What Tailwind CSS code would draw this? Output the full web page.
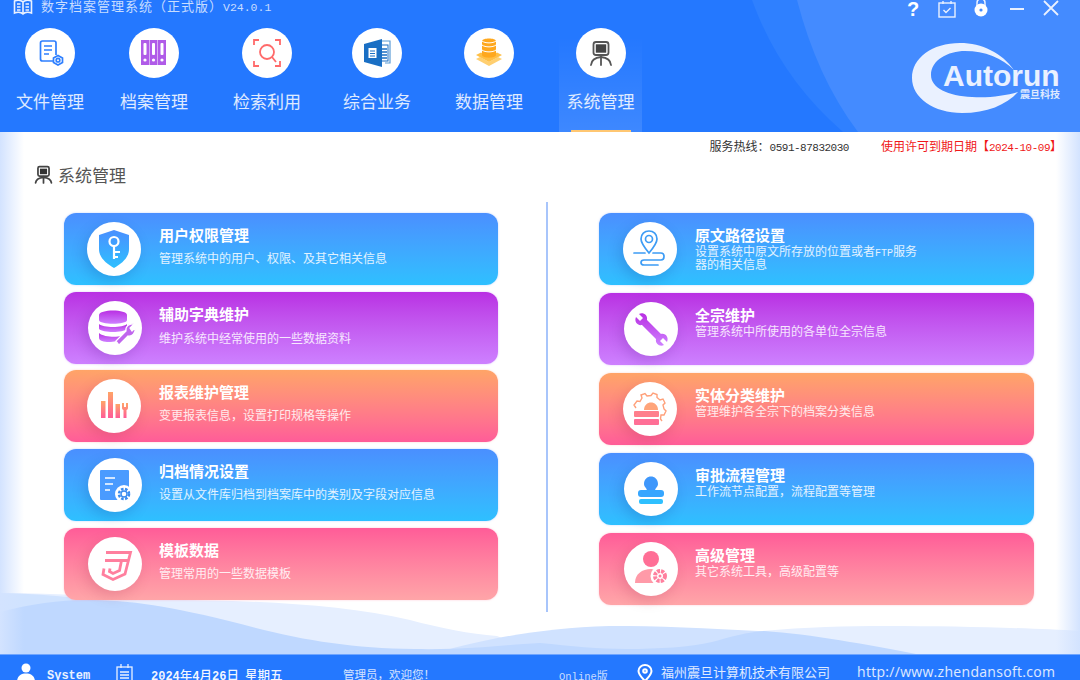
<!DOCTYPE html>
<html lang="zh-CN">
<head>
    <meta charset="UTF-8">
    <title>数字档案管理系统</title>
    <script src="https://cdn.jsdelivr.net/npm/@tailwindcss/browser@4"></script>
</head>
<body class="w-[1080px] h-[680px] overflow-hidden bg-white font-['Noto_Sans_CJK_SC','Liberation_Sans',sans-serif]">
    <!-- shared gradients -->
    <svg class="absolute w-0 h-0">
        <defs>
            <linearGradient id="gBlue" x1="0" y1="0" x2="0" y2="1"><stop offset="0" stop-color="#4a8fff"/><stop offset="1" stop-color="#2ec0ff"/></linearGradient>
            <linearGradient id="gPurple" x1="0" y1="0" x2="0" y2="1"><stop offset="0" stop-color="#b92fe3"/><stop offset="1" stop-color="#cd80ff"/></linearGradient>
            <linearGradient id="gOrange" x1="0" y1="0" x2="0" y2="1"><stop offset="0" stop-color="#ffa467"/><stop offset="1" stop-color="#ff5c98"/></linearGradient>
        </defs>
    </svg>

    <!-- Header -->
    <header class="relative h-[132px] bg-[#2478ff] overflow-hidden text-white">
        <svg class="absolute inset-0" width="1080" height="132" viewBox="0 0 1080 132">
            <path d="M752 0C770 50 800 95 843 132H1080V0Z" fill="#2f80ff"/>
            <path d="M797 0C810 50 830 95 858 132H1080V0Z" fill="#448bff"/>
        </svg>

        <!-- Logo -->
        <div class="absolute left-[912px] top-[43px] w-[150px] h-[70px]">
            <svg class="absolute inset-0" width="150" height="70" viewBox="912 43 150 70">
                <path d="M1014 70C1002 53 982 43 960 43C932 43 912 58 912 78C912 98 934 113 962 113C987 113 1006 105 1018 92C1005 96 988 98 972 97C948 96 931 88 931 75C931 60 948 51 965 51C985 51 1002 58 1014 70Z" fill="#eaf1ff"/>
            </svg>
            <div class="absolute left-[31px] top-[16px] text-[30px] leading-[34px] font-bold text-[#eaf1ff] font-['Liberation_Sans',sans-serif]">Autorun</div>
            <div class="absolute left-[108px] top-[45px] text-[10px] leading-[12px] font-bold text-[#dfe9ff]">震旦科技</div>
        </div>

        <!-- Title bar -->
        <div class="relative h-[14px] flex items-center">
            <svg class="ml-[13px] w-[20px] h-[17px] shrink-0 mt-[1px]" viewBox="0 0 20 17" fill="none" stroke="#eaf1ff" stroke-width="1.6">
                <path d="M10 3C8 1 4 1 1.5 2V14C4 13 8 13 10 15C12 13 16 13 18.5 14V2C16 1 12 1 10 3ZM10 3V15"/>
                <path d="M4 5H7.5M4 8H7.5M4 11H7.5M12.500 5H16M12.500 8H16M12.500 11H16"/>
            </svg>
            <div class="ml-[8px] text-[13px] leading-[14px] tracking-[1px] text-white/75 whitespace-nowrap">数字档案管理系统（正式版）<span class="font-['Liberation_Mono',monospace] text-[11.500px] tracking-[0px]">V24.0.1</span></div>
            <div class="ml-auto mr-[21px] flex items-center">
                <div class="w-[18px] text-[20px] leading-[20px] font-bold text-center font-['Liberation_Sans',sans-serif] mt-[4px]">?</div>
                <svg class="ml-[16px] mt-[4px] shrink-0" width="18" height="17" viewBox="0 0 18 17" fill="none" stroke="#eaf1ff" stroke-width="1.400"><rect x="1" y="2" width="16" height="14"/><path d="M5 0V3M13 0V3M5.500 9L8 11.500L12.500 7"/></svg>
                <svg class="ml-[17px] mt-[1px] shrink-0" width="16" height="20" viewBox="0 0 16 20"><path d="M4 9V5C4 2 6 .8 8 .8S12 2 12 5V9" fill="none" stroke="#eaf1ff" stroke-width="1.500"/><circle cx="8" cy="12" r="6.500" fill="#fff"/><circle cx="8" cy="12" r="1.600" fill="#448bff"/></svg>
                <div class="ml-[21px] mt-[4px] w-[14px] h-[2px] bg-[#eaf1ff]"></div>
                <svg class="ml-[19px] mt-[2px] shrink-0" width="16" height="16" viewBox="0 0 16 16" stroke="#eaf1ff" stroke-width="1.800"><path d="M1 1L15 15M15 1L1 15"/></svg>
            </div>
        </div>

        <!-- Nav -->
        <nav class="relative mt-[14px] ml-[8px] flex h-[104px] text-[17px] leading-[24px] text-white/85">
            <div class="w-[84px] h-full flex flex-col items-center">
                <div class="w-[50px] h-[50px] rounded-full bg-white">
                    <svg viewBox="0 0 50 50" fill="none" stroke="#2e7fff" stroke-width="1.700">
                        <path d="M30 33H17.500C16 33 15.500 32 15.500 31V15C15.500 13.500 16.500 13 17.500 13H29C30.500 13 31 14 31 15V27"/>
                        <path d="M19 18H27M19 22H27M19 26H24"/>
                        <path d="M33 27.500L37.500 30V34.500L33 37L28.500 34.500V30Z" fill="#fff"/>
                        <circle cx="33" cy="32.200" r="1.800"/>
                    </svg>
                </div>
                <div class="mt-[11px]">文件管理</div>
            </div>
            <div class="ml-[20px] w-[84px] h-full flex flex-col items-center">
                <div class="w-[50px] h-[50px] rounded-full bg-white">
                    <svg viewBox="0 0 50 50">
                        <rect x="12" y="12" width="8" height="25" fill="#b05be8"/><rect x="20.500" y="12" width="8" height="25" fill="#b05be8"/><rect x="29" y="12" width="8" height="25" fill="#b05be8"/>
                        <g fill="#fff"><rect x="14.500" y="15" width="3" height="12" rx="1"/><rect x="23" y="15" width="3" height="12" rx="1"/><rect x="31.500" y="15" width="3" height="12" rx="1"/><circle cx="16" cy="32" r="1.600"/><circle cx="24.500" cy="32" r="1.600"/><circle cx="33" cy="32" r="1.600"/></g>
                    </svg>
                </div>
                <div class="mt-[11px]">档案管理</div>
            </div>
            <div class="ml-[29px] w-[84px] h-full flex flex-col items-center">
                <div class="w-[50px] h-[50px] rounded-full bg-white">
                    <svg viewBox="0 0 50 50" fill="none" stroke="#ff6a6a" stroke-width="1.800">
                        <path d="M12 17V12H17M33 12H38V17M12 33V38H17M33 38H38V33"/>
                        <circle cx="25" cy="24" r="7"/><path d="M30 29L34 34"/>
                    </svg>
                </div>
                <div class="mt-[11px]">检索利用</div>
            </div>
            <div class="ml-[26px] w-[84px] h-full flex flex-col items-center">
                <div class="w-[50px] h-[50px] rounded-full bg-white">
                    <svg viewBox="0 0 50 50">
                        <path d="M29 13H38V35H33" fill="none" stroke="#5b9bd5" stroke-width="1.200"/>
                        <rect x="27" y="17" width="9" height="16" fill="#fff" stroke="#1a6fc4"/>
                        <path d="M29 21H35M29 24H35M29 27H35M29 30H35" stroke="#1a6fc4" stroke-width="1.400"/>
                        <path d="M12 16L30 11V39L12 34Z" fill="#1a6fc4"/>
                        <rect x="16.500" y="20" width="8" height="10" fill="#fff"/>
                        <path d="M18 23H23M18 25.500H23M18 28H23" stroke="#1a6fc4"/>
                    </svg>
                </div>
                <div class="mt-[11px]">综合业务</div>
            </div>
            <div class="ml-[28px] w-[84px] h-full flex flex-col items-center">
                <div class="w-[50px] h-[50px] rounded-full bg-white">
                    <svg viewBox="0 0 50 50">
                        <path d="M12 31L25 38L38 31L34 29L25 34L16 29Z" fill="#ffcf70"/>
                        <path d="M12 27L25 34L38 27L33 24.500L25 29L17 24.500Z" fill="#ffbf45"/>
                        <path d="M18 13C18 9.500 32 9.500 32 13V27C32 30.500 18 30.500 18 27Z" fill="#ffa81e"/>
                        <path d="M18 17C21 19.500 29 19.500 32 17M18 22C21 24.500 29 24.500 32 22M18 13C21 15.500 29 15.500 32 13" fill="none" stroke="#fff" stroke-width="1"/>
                    </svg>
                </div>
                <div class="mt-[11px]">数据管理</div>
            </div>
            <div class="ml-[28px] w-[83px] h-full flex flex-col items-center relative">
                <div class="absolute left-0 right-0 top-[9px] bottom-0 bg-linear-to-b from-white/0 to-white/12"></div>
                <div class="relative w-[50px] h-[50px] rounded-full bg-white">
                    <svg viewBox="0 0 50 50" fill="none" stroke="#555" stroke-width="1.800" stroke-linecap="round">
                        <rect x="17.500" y="14" width="15" height="13" rx="2.500"/>
                        <rect x="19.800" y="16.300" width="10.400" height="8.400" fill="#444" stroke="none"/>
                        <path d="M25 28V37M25 29C20 29.500 15.500 31 15 37M25 29C30 29.500 34.500 31 35 37"/>
                    </svg>
                </div>
                <div class="relative mt-[11px]">系统管理</div>
                <div class="absolute left-[12px] bottom-0 w-[60px] h-[2px] bg-[#ffc772]"></div>
            </div>
        </nav>
    </header>

    <!-- Main -->
    <main class="relative h-[522px] bg-white overflow-hidden">
        <svg class="absolute left-0 bottom-0" width="1080" height="64" viewBox="0 590 1080 64">
            <path d="M0 593C60 593 110 597 160 600C250 600 340 604 410 620C440 628 470 634 497 636L540 654H0Z" fill="#e6efff"/>
            <path d="M700 640C760 628 830 626 885 626C960 626 1030 628 1080 631V654H700Z" fill="#e6efff"/>
            <path d="M440 652C480 640 540 628 609 626C660 626 710 628 770 632L800 654H440Z" fill="#d0e2ff"/>
            <path d="M0 593C40 594 70 597 96 600L0 612Z" fill="#d0e3ff"/>
            <path d="M0 612C30 604 60 600 86 600C130 600 170 606 241 624C300 640 350 648 414 649C470 650 500 645 540 643C570 646 600 649 626 649C660 649 690 647 712 642C730 637 748 632 764 631C810 634 870 645 916 654H0Z" fill="#bfd8ff"/>
        </svg>
        <div class="absolute left-0 top-0 bottom-0 w-[24px] bg-linear-to-r from-[#d3e3ff] to-white/0"></div>
        <div class="absolute right-0 top-0 bottom-0 w-[24px] bg-linear-to-l from-[#d3e3ff] to-white/0"></div>

        <div class="relative h-[30px] flex items-center justify-end pr-[18px] text-[12px] leading-[16px] whitespace-nowrap">
            <div class="text-[#333]">服务热线：<span class="font-['Liberation_Mono',monospace] text-[11px] tracking-[-.5px]">0591-87832030</span></div>
            <div class="ml-[32px] text-[#f01818]">使用许可到期日期<span>【</span><span class="font-['Liberation_Mono',monospace] text-[11px] tracking-[-.5px]">2024-10-09</span><span>】</span></div>
        </div>

        <div class="relative h-[26px] pl-[34px] flex items-center text-[17px] text-[#555]">
            <svg width="19" height="20" viewBox="0 0 24 24" fill="none" stroke="#444" stroke-width="2.200" stroke-linecap="round">
                <rect x="5" y="1.500" width="14" height="12" rx="2"/>
                <rect x="7.500" y="4" width="9" height="7" fill="#333" stroke="none"/>
                <path d="M12 14V22M12 15C8 15.500 2.500 16.500 2 22M12 15C16 15.500 21.500 16.500 22 22"/>
            </svg>
            <div class="ml-[5px]">系统管理</div>
        </div>

        <div class="relative mt-[14px] pl-[64px] flex">
            <!-- Left cards -->
            <div class="w-[434px] pt-[11px] flex flex-col gap-[7px]">
                <div class="h-[72px] rounded-[12px] bg-linear-to-b from-[#4a8fff] to-[#2ec0ff] shadow-[0_0_2px_rgba(120,160,255,.5)] flex text-white">
                    <div class="ml-[23px] mt-[9px] w-[54px] h-[54px] rounded-full bg-white shadow-[-3px_5px_14px_rgba(0,40,120,.18)] shrink-0">
                        <svg viewBox="0 0 54 54"><path d="M27 8L42 13V27C42 36 34 42 27 46C20 42 12 36 12 27V13Z" fill="url(#gBlue)"/><g fill="none" stroke="#fff" stroke-width="2.200"><circle cx="27" cy="19.500" r="4.500"/><path d="M27 24V37M27 30H33M27 35H31"/></g></svg>
                    </div>
                    <div class="ml-[18px] pt-[12px]">
                        <div class="text-[15px] leading-[20px] font-bold">用户权限管理</div>
                        <div class="mt-[5px] text-[12px] leading-[16px] text-white/85">管理系统中的用户、权限、及其它相关信息</div>
                    </div>
                </div>
                <div class="h-[72px] rounded-[12px] bg-linear-to-b from-[#b92fe3] to-[#cd80ff] shadow-[0_0_2px_rgba(190,120,255,.5)] flex text-white">
                    <div class="ml-[24px] mt-[9px] w-[54px] h-[54px] rounded-full bg-white shadow-[-3px_5px_14px_rgba(60,0,120,.18)] shrink-0">
                        <svg viewBox="0 0 54 54"><g fill="url(#gPurple)"><path d="M11 14C11 8 39 8 39 14V19C39 24 11 24 11 19Z"/><path d="M11 23C15 27 35 27 39 23V28C35 32 15 32 11 28Z"/><path d="M11 32C15 36 28 36.500 33 35L28 40C22 42 11 41 11 37Z"/></g><path d="M28 40L38 30C37 26 41 22 46 23L42 27L44 30L47 27C48 32 44 36 40 35L31 44Z" fill="#c066ee" stroke="#fff" stroke-width="1.200"/></svg>
                    </div>
                    <div class="ml-[17px] pt-[12px]">
                        <div class="text-[15px] leading-[20px] font-bold">辅助字典维护</div>
                        <div class="mt-[6px] text-[12px] leading-[16px] text-white/85">维护系统中经常使用的一些数据资料</div>
                    </div>
                </div>
                <div class="-mt-[1px] h-[72px] rounded-[12px] bg-linear-to-b from-[#ffa467] to-[#ff5c98] shadow-[0_0_2px_rgba(255,160,140,.5)] flex text-white">
                    <div class="ml-[23px] mt-[9px] w-[54px] h-[54px] rounded-full bg-white shadow-[-3px_5px_14px_rgba(120,0,40,.15)] shrink-0">
                        <svg viewBox="0 0 54 54"><g fill="url(#gOrange)"><rect x="14" y="22" width="4.500" height="17"/><rect x="21" y="13" width="5" height="26"/><rect x="28.500" y="25" width="4.500" height="14"/><path d="M35 24H37V28H39V24H41V29C41 30 40 31 39.500 31V39H36.500V31C36 31 35 30 35 29Z"/></g></svg>
                    </div>
                    <div class="ml-[18px] pt-[12px]">
                        <div class="text-[15px] leading-[20px] font-bold">报表维护管理</div>
                        <div class="mt-[5px] text-[12px] leading-[16px] text-white/85">变更报表信息，设置打印规格等操作</div>
                    </div>
                </div>
                <div class="h-[72px] rounded-[12px] bg-linear-to-b from-[#4a8fff] to-[#2ec0ff] shadow-[0_0_2px_rgba(120,160,255,.5)] flex text-white">
                    <div class="ml-[24px] mt-[9px] w-[54px] h-[54px] rounded-full bg-white shadow-[-3px_5px_14px_rgba(0,40,120,.18)] shrink-0">
                        <svg viewBox="0 0 54 54"><rect x="12" y="12" width="29" height="30" rx="1" fill="#4a9bff"/><path d="M17 20H27M17 26H25M17 32H22" stroke="#fff" stroke-width="1.600"/><circle cx="36" cy="36" r="9" fill="#fff"/><circle cx="36" cy="36" r="5" fill="none" stroke="#3a8cf0" stroke-width="2.600" stroke-dasharray="2.500 1.500"/><circle cx="36" cy="36" r="3" fill="none" stroke="#3a8cf0" stroke-width="1.400"/></svg>
                    </div>
                    <div class="ml-[17px] pt-[12px]">
                        <div class="text-[15px] leading-[20px] font-bold">归档情况设置</div>
                        <div class="mt-[5px] text-[12px] leading-[16px] text-white/85">设置从文件库归档到档案库中的类别及字段对应信息</div>
                    </div>
                </div>
                <div class="h-[72px] rounded-[12px] bg-linear-to-b from-[#ff5c98] to-[#ffa5a8] shadow-[0_0_2px_rgba(255,140,170,.5)] flex text-white">
                    <div class="ml-[24px] mt-[9px] w-[54px] h-[54px] rounded-full bg-white shadow-[-3px_5px_14px_rgba(120,0,40,.15)] shrink-0">
                        <svg viewBox="0 0 54 54" fill="none" stroke="#ff7f9e" stroke-width="2.800"><path d="M18 15.500H42.500L37 37L25 42.500L15 37.500L16 31.500M17 23.500H39.500M22 31.500L21.500 34.500L25 36.500L31.500 33.500L33.500 23.500"/></svg>
                    </div>
                    <div class="ml-[17px] pt-[12px]">
                        <div class="text-[15px] leading-[20px] font-bold">模板数据</div>
                        <div class="mt-[5px] text-[12px] leading-[16px] text-white/85">管理常用的一些数据模板</div>
                    </div>
                </div>
            </div>

            <div class="ml-[48px] w-[2px] h-[410px] bg-[#a8c5fb]"></div>

            <!-- Right cards -->
            <div class="ml-[51px] w-[435px] pt-[11px] flex flex-col gap-[8px]">
                <div class="h-[72px] rounded-[12px] bg-linear-to-b from-[#4a8fff] to-[#2ec0ff] shadow-[0_0_2px_rgba(120,160,255,.5)] flex text-white">
                    <div class="ml-[24px] mt-[9px] w-[54px] h-[54px] rounded-full bg-white shadow-[-3px_5px_14px_rgba(0,40,120,.18)] shrink-0">
                        <svg viewBox="0 0 54 54" fill="none" stroke="#3d9cf5" stroke-width="1.700"><path d="M26 31C21 25 18 21 18 17C18 12 21.500 9 26 9C30.500 9 34 12 34 17C34 21 31 25 26 31Z"/><circle cx="26" cy="17" r="3.500"/><path d="M11 31H22M30 31H38C42 31 42 38 38 38H21C17 38 17 43 21 43H35" stroke-linecap="round"/></svg>
                    </div>
                    <div class="ml-[18px] pt-[12px]">
                        <div class="text-[15px] leading-[20px] font-bold">原文路径设置</div>
                        <div class="-mt-[1px] w-[224px] text-[12px] leading-[13px] text-white/85">设置系统中原文所存放的位置或者<span class="font-['Liberation_Mono',monospace] text-[10px] leading-[1px]">FTP</span>服务器的相关信息</div>
                    </div>
                </div>
                <div class="h-[72px] rounded-[12px] bg-linear-to-b from-[#b92fe3] to-[#cd80ff] shadow-[0_0_2px_rgba(190,120,255,.5)] flex text-white">
                    <div class="ml-[25px] mt-[9px] w-[54px] h-[54px] rounded-full bg-white shadow-[-3px_5px_14px_rgba(60,0,120,.18)] shrink-0">
                        <svg viewBox="0 0 54 54"><path d="M12 15L16 19L19 16L15 12C19 10 24 13 23 18L37 32C42 31 45 36 43 40L39 36L36 39L40 43C36 45 31 42 32 37L18 23C13 24 10 19 12 15Z" fill="url(#gPurple)"/></svg>
                    </div>
                    <div class="ml-[17px] pt-[12px]">
                        <div class="text-[15px] leading-[20px] font-bold">全宗维护</div>
                        <div class="-mt-[1px] text-[12px] leading-[13px] text-white/85">管理系统中所使用的各单位全宗信息</div>
                    </div>
                </div>
                <div class="h-[72px] rounded-[12px] bg-linear-to-b from-[#ffa467] to-[#ff5c98] shadow-[0_0_2px_rgba(255,160,140,.5)] flex text-white">
                    <div class="ml-[24px] mt-[9px] w-[54px] h-[54px] rounded-full bg-white shadow-[-3px_5px_14px_rgba(120,0,40,.15)] shrink-0">
                        <svg viewBox="0 0 54 54"><path d="M13 26L11 23L14 19L17 19.500L19 16L18 13L22 11.500L24 14L28 13.500L30 11L34 12.500L34 15.500L37 18L40 17L42 21L40 23L41 27L43 29L41 33L38 33L37.500 37L39 39" fill="none" stroke="#ffa07a" stroke-width="1.400"/><path d="M21 28C21 18 35 18 35 28Z" fill="#ffa47a"/><rect x="11" y="29" width="25" height="6" rx="1" fill="#ff7f8c"/><rect x="11" y="37" width="25" height="6" rx="1" fill="#ff6f96"/></svg>
                    </div>
                    <div class="ml-[18px] pt-[12px]">
                        <div class="text-[15px] leading-[20px] font-bold">实体分类维护</div>
                        <div class="-mt-[1px] text-[12px] leading-[13px] text-white/85">管理维护各全宗下的档案分类信息</div>
                    </div>
                </div>
                <div class="h-[72px] rounded-[12px] bg-linear-to-b from-[#4a8fff] to-[#2ec0ff] shadow-[0_0_2px_rgba(120,160,255,.5)] flex text-white">
                    <div class="ml-[25px] mt-[9px] w-[54px] h-[54px] rounded-full bg-white shadow-[-3px_5px_14px_rgba(0,40,120,.18)] shrink-0">
                        <svg viewBox="0 0 54 54"><path d="M20 22C20 12 34 12 34 22C34 25 31 26 31 29H23C23 26 20 25 20 22Z" fill="#3f97fb"/><rect x="14" y="28" width="26" height="7" rx="3" fill="#36a6ff"/><rect x="15" y="37" width="24" height="5" rx="2" fill="#2ec0ff"/></svg>
                    </div>
                    <div class="ml-[17px] pt-[12px]">
                        <div class="text-[15px] leading-[20px] font-bold">审批流程管理</div>
                        <div class="-mt-[1px] text-[12px] leading-[13px] text-white/85">工作流节点配置，流程配置等管理</div>
                    </div>
                </div>
                <div class="h-[72px] rounded-[12px] bg-linear-to-b from-[#ff5c98] to-[#ffa5a8] shadow-[0_0_2px_rgba(255,140,170,.5)] flex text-white">
                    <div class="ml-[25px] mt-[9px] w-[54px] h-[54px] rounded-full bg-white shadow-[-3px_5px_14px_rgba(120,0,40,.15)] shrink-0">
                        <svg viewBox="0 0 54 54"><circle cx="27" cy="17" r="8" fill="#ff6f96"/><path d="M11 41C11 32 18 27 27 27C31 27 34 28 36 30L30 41Z" fill="#ff9aa8"/><circle cx="36" cy="34" r="9.500" fill="#fff"/><circle cx="36" cy="34" r="5" fill="none" stroke="#ff7f9e" stroke-width="4" stroke-dasharray="3 1"/><circle cx="36" cy="34" r="1.500" fill="#ff7f9e"/></svg>
                    </div>
                    <div class="ml-[17px] pt-[12px]">
                        <div class="text-[15px] leading-[20px] font-bold">高级管理</div>
                        <div class="-mt-[1px] text-[12px] leading-[13px] text-white/85">其它系统工具，高级配置等</div>
                    </div>
                </div>
            </div>
        </div>
    </main>

    <!-- Footer -->
    <footer class="h-[26px] bg-[#2478ff] border-t border-[#6fa5ff] overflow-hidden flex items-start pl-[17px] text-white whitespace-nowrap">
        <svg class="mt-[8px] shrink-0" width="18" height="20" viewBox="0 0 18 20" fill="#fff"><circle cx="9" cy="5" r="4.500"/><path d="M0 19C0 13 4 10.500 9 10.500S18 13 18 19Z"/></svg>
        <div class="ml-[12px] w-[43px] mt-[14px] text-[12px] leading-[14px] font-bold font-['Liberation_Mono',monospace] text-white/90">System</div>
        <svg class="ml-[26px] mt-[9px] shrink-0" width="17" height="18" viewBox="0 0 17 18" fill="none" stroke="#eaf1ff" stroke-width="1.300"><rect x="1" y="3" width="15" height="14"/><path d="M5 0V4M12 0V4M4 8H13M4 11H13M4 14H13"/></svg>
        <div class="ml-[18px] w-[133px] mt-[13px] text-[12.500px] leading-[14px] font-medium text-white/95"><span class="font-['Liberation_Mono',monospace] text-[12px] font-bold leading-[1px]">2024</span>年<span class="font-['Liberation_Mono',monospace] text-[12px] font-bold leading-[1px]">4</span>月<span class="font-['Liberation_Mono',monospace] text-[12px] font-bold leading-[1px]">26</span>日<span class="ml-[6px]">星期五</span></div>
        <div class="ml-[59px] w-[216px] mt-[12px] text-[11.500px] leading-[14px] text-white/80">管理员，欢迎您！</div>
        <div class="w-[78px] mt-[13px] text-[11px] leading-[14px] text-white/75"><span class="font-['Liberation_Mono',monospace] text-[10.500px] leading-[1px]">Online</span>版</div>
        <svg class="shrink-0 mt-[9px]" width="16" height="18" viewBox="0 0 16 18" fill="none" stroke="#fff" stroke-width="2"><path d="M8 17C4 13 1.500 10 1.500 7C1.500 3.500 4.500 1 8 1S14.500 3.500 14.500 7C14.500 10 12 13 8 17Z"/><circle cx="8" cy="7" r="1.800"/></svg>
        <div class="ml-[8px] w-[196px] mt-[8px] text-[13px] leading-[18px] text-white/85">福州震旦计算机技术有限公司</div>
        <div class="mt-[8px] text-[14px] leading-[18px] tracking-[.3px] text-white/85 font-['Open_Sans',sans-serif]">http://www.zhendansoft.com</div>
    </footer>
</body>
</html>
